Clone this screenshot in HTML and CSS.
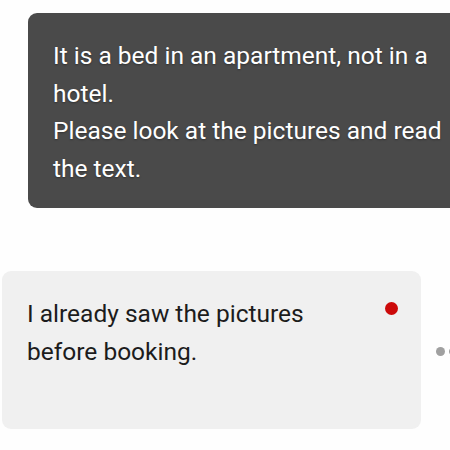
FILE: index.html
```html
<!DOCTYPE html>
<html>
<head>
<meta charset="utf-8">
<link rel="stylesheet" href="styles.css">
</head>
<body>
<div class="chat">
  <div class="row row-out">
    <div class="bubble out">
      <p>It is a bed in an apartment, not in a hotel.<br>Please look at the pictures and read the text.</p>
    </div>
  </div>
  <div class="row row-in">
    <div class="bubble in">
      <p>I already saw the pictures<br>before booking.</p>
      <span class="unread"></span>
    </div>
    <div class="dots"><span></span><span></span></div>
  </div>
</div>
</body>
</html>
```
FILE: styles.css
```css
html, body {
  margin: 0;
  padding: 0;
  background: #fefefe;
  width: 450px;
  height: 450px;
  overflow: hidden;
  font-family: Roboto, "Liberation Sans", sans-serif;
}
.chat {
  display: flex;
  flex-direction: column;
  gap: 63px;
  padding-top: 13px;
}
.row {
  overflow: hidden;
}
.row-out {
  display: flex;
  padding-left: 28px;
}
.bubble p {
  margin: 0;
  font-size: 24.5px;
  line-height: 37.5px;
}
.out {
  width: 440px;
  flex-shrink: 0;
  height: 195px;
  box-sizing: border-box;
  background: #4a4a4a;
  border-radius: 9px;
  padding: 24px 0 0 25px;
  color: #ffffff;
  text-shadow: 0 1px 2px rgba(0,0,0,0.35);
}
.out p { width: 405px; }
.row-in {
  display: flex;
  align-items: center;
  padding-left: 2px;
}
.in {
  position: relative;
  width: 419px;
  height: 158px;
  flex-shrink: 0;
  box-sizing: border-box;
  background: #f0f0f0;
  border-radius: 9px;
  padding: 24px 0 0 25px;
  color: #1c1c1c;
}
.unread {
  position: absolute;
  top: 31px;
  right: 23px;
  width: 13px;
  height: 13px;
  border-radius: 50%;
  background: #cc0a0a;
}
.dots {
  display: flex;
  gap: 4px;
  margin-left: 15px;
  margin-top: 2px;
}
.dots span {
  width: 9px;
  height: 9px;
  border-radius: 50%;
  background: #a0a0a0;
  flex-shrink: 0;
}
```
